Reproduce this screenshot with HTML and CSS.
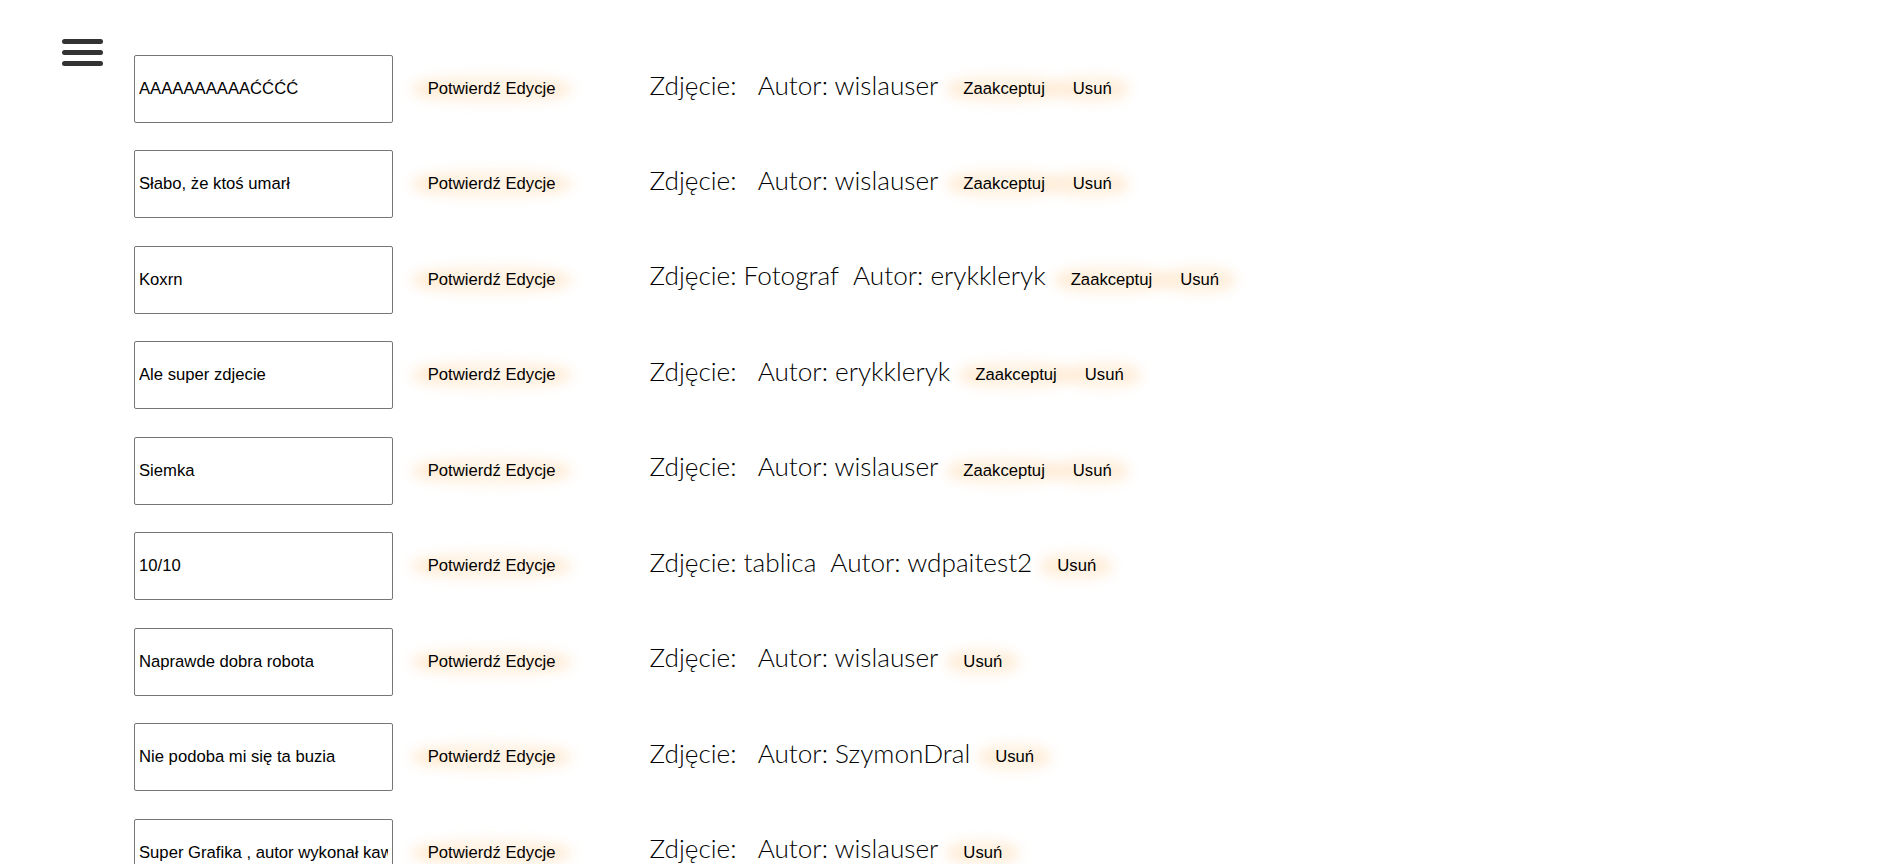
FILE: index.html
```html
<!DOCTYPE html>
<html lang="pl">
<head>
<meta charset="utf-8">
<title>Komentarze</title>
<link rel="stylesheet" href="styles.css">
</head>
<body>
<div class="page">
  <div class="menu-toggle" aria-label="menu">
    <span class="bar"></span>
    <span class="bar"></span>
    <span class="bar"></span>
  </div>
  <main class="list">
    <div class="row">
      <input class="comment" type="text" value="AAAAAAAAAAĆĆĆĆ">
      <button class="btn confirm">Potwierdź Edycje</button>
      <div class="info"><span class="photo">Zdjęcie: </span><span class="author">Autor: wislauser</span></div>
      <button class="btn accept">Zaakceptuj</button>
      <button class="btn remove">Usuń</button>
    </div>
    <div class="row">
      <input class="comment" type="text" value="Słabo, że ktoś umarł">
      <button class="btn confirm">Potwierdź Edycje</button>
      <div class="info"><span class="photo">Zdjęcie: </span><span class="author">Autor: wislauser</span></div>
      <button class="btn accept">Zaakceptuj</button>
      <button class="btn remove">Usuń</button>
    </div>
    <div class="row">
      <input class="comment" type="text" value="Koxrn">
      <button class="btn confirm">Potwierdź Edycje</button>
      <div class="info"><span class="photo">Zdjęcie: Fotograf</span><span class="author">Autor: erykkleryk</span></div>
      <button class="btn accept">Zaakceptuj</button>
      <button class="btn remove">Usuń</button>
    </div>
    <div class="row">
      <input class="comment" type="text" value="Ale super zdjecie">
      <button class="btn confirm">Potwierdź Edycje</button>
      <div class="info"><span class="photo">Zdjęcie: </span><span class="author">Autor: erykkleryk</span></div>
      <button class="btn accept">Zaakceptuj</button>
      <button class="btn remove">Usuń</button>
    </div>
    <div class="row">
      <input class="comment" type="text" value="Siemka">
      <button class="btn confirm">Potwierdź Edycje</button>
      <div class="info"><span class="photo">Zdjęcie: </span><span class="author">Autor: wislauser</span></div>
      <button class="btn accept">Zaakceptuj</button>
      <button class="btn remove">Usuń</button>
    </div>
    <div class="row">
      <input class="comment" type="text" value="10/10">
      <button class="btn confirm">Potwierdź Edycje</button>
      <div class="info"><span class="photo">Zdjęcie: tablica</span><span class="author">Autor: wdpaitest2</span></div>
      <button class="btn remove">Usuń</button>
    </div>
    <div class="row">
      <input class="comment" type="text" value="Naprawde dobra robota">
      <button class="btn confirm">Potwierdź Edycje</button>
      <div class="info"><span class="photo">Zdjęcie: </span><span class="author">Autor: wislauser</span></div>
      <button class="btn remove">Usuń</button>
    </div>
    <div class="row">
      <input class="comment" type="text" value="Nie podoba mi się ta buzia">
      <button class="btn confirm">Potwierdź Edycje</button>
      <div class="info"><span class="photo">Zdjęcie: </span><span class="author">Autor: SzymonDral</span></div>
      <button class="btn remove">Usuń</button>
    </div>
    <div class="row">
      <input class="comment" type="text" value="Super Grafika , autor wykonał kawał dobrej roboty">
      <button class="btn confirm">Potwierdź Edycje</button>
      <div class="info"><span class="photo">Zdjęcie: </span><span class="author">Autor: wislauser</span></div>
      <button class="btn remove">Usuń</button>
    </div>
  </main>
</div>
</body>
</html>
```

FILE: styles.css
```css
html, body {
  margin: 0;
  padding: 0;
  background: #ffffff;
}

body {
  font-family: "Liberation Sans", Arial, sans-serif;
  color: #000;
}

.page {
  display: flex;
  align-items: flex-start;
}

.menu-toggle {
  display: flex;
  flex-direction: column;
  gap: 6px;
  margin-left: 62px;
  margin-top: 39px;
  width: 41px;
}

.bar {
  display: block;
  height: 5px;
  border-radius: 3px;
  background: #333333;
}

.list {
  display: flex;
  flex-direction: column;
  gap: 27.47px;
  margin-left: 31px;
  padding-top: 55px;
}

.row {
  display: flex;
  align-items: center;
  height: 68px;
}

.comment {
  box-sizing: border-box;
  width: 259px;
  height: 68px;
  margin: 0;
  padding: 0 4px;
  border: 1px solid #767676;
  border-radius: 2px;
  font-family: "Liberation Sans", Arial, sans-serif;
  font-size: 16.67px;
  color: #000;
  background: #fff;
  outline: none;
}

.btn {
  position: relative;
  isolation: isolate;
  margin: 0;
  padding: 7px 24px;
  border: none;
  background: transparent;
  font-family: "Liberation Sans", Arial, sans-serif;
  font-size: 16.67px;
  color: #000;
  cursor: pointer;
}

.btn::before {
  content: "";
  position: absolute;
  inset: 6px 8px;
  border-radius: 50%;
  background: radial-gradient(ellipse closest-side,
    rgba(255, 240, 220, 0.25) 0%,
    rgba(255, 215, 165, 0.45) 70%,
    rgba(255, 200, 140, 0.55) 100%);
  filter: blur(7px);
  z-index: -1;
}

.confirm {
  margin-left: 10.7px;
}

.info {
  display: flex;
  margin-left: 70px;
  margin-bottom: 9px;
  font-family: "Lato", "Open Sans", sans-serif;
  font-weight: 300;
  font-size: 26.2px;
  color: #000;
}

.photo {
  white-space: pre;
  margin-right: 14px;
}

.accept {
  margin-left: 1px;
}

.accept + .remove {
  margin-left: -20px;
}

.info + .remove {
  margin-left: 1px;
}
```
